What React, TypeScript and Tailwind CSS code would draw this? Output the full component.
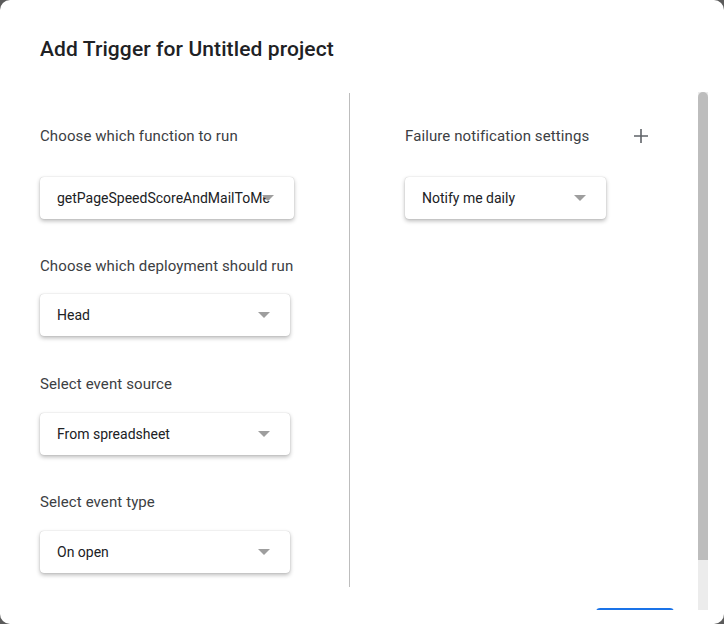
import { ReactNode } from "react";

function Caret() {
  return (
    <svg width="12" height="6" viewBox="0 0 12 6" className="shrink-0 -ml-3 relative">
      <path d="M0 0h12L6 6z" fill="#9e9e9e" />
    </svg>
  );
}

function Select({ value, width }: { value: string; width: string }) {
  return (
    <div
      className={`${width} h-[42px] rounded-[4px] bg-white flex items-center pl-[17px] pr-[20px] shadow-[0_0_1px_rgba(0,0,0,0.25),0_2px_4px_rgba(0,0,0,0.28)]`}
    >
      <span className="flex-1 min-w-0 text-[14px] text-[#202124] whitespace-nowrap overflow-hidden">
        {value}
      </span>
      <Caret />
    </div>
  );
}

function Label({ children, className = "" }: { children: ReactNode; className?: string }) {
  return (
    <p className={`text-[15px] leading-5 text-[#3c4043] tracking-[0.1px] ${className}`}>{children}</p>
  );
}

export default function App() {
  return (
    <div
      className="w-[724px] h-[624px] bg-[#5b5b5b]"
      style={{ fontFamily: "Roboto, 'Liberation Sans', sans-serif" }}
    >
      <div className="h-full rounded-[10px] bg-white flex flex-col overflow-hidden">
        <h1 className="h-[92px] shrink-0 pl-10 pt-[35px] text-[21px] leading-7 font-medium text-[#202124] tracking-[0.1px]">
          Add Trigger for Untitled project
        </h1>

        <div className="flex h-[518px] shrink-0">
          <div className="flex-1 flex flex-col overflow-hidden">
            <div className="flex shrink-0">
              {/* left column */}
              <div className="w-[349px] shrink-0 pl-10 pt-[34px]">
                <Label>Choose which function to run</Label>
                <div className="mt-[31px]">
                  <Select value="getPageSpeedScoreAndMailToMe" width="w-[254px]" />
                </div>
                <Label className="mt-[37px]">Choose which deployment should run</Label>
                <div className="mt-[18px]">
                  <Select value="Head" width="w-[250px]" />
                </div>
                <Label className="mt-[38px]">Select event source</Label>
                <div className="mt-[19px]">
                  <Select value="From spreadsheet" width="w-[250px]" />
                </div>
                <Label className="mt-[37px]">Select event type</Label>
                <div className="mt-[19px]">
                  <Select value="On open" width="w-[250px]" />
                </div>
              </div>

              <div className="w-px h-[494px] mt-px bg-[#bdbdbd] shrink-0" />

              {/* right column */}
              <div className="flex-1 pl-[55px] pt-[34px]">
                <div className="flex items-center justify-between pr-[50px]">
                  <Label>Failure notification settings</Label>
                  <svg width="14" height="14" viewBox="0 0 14 14">
                    <path d="M7 0v14M0 7h14" stroke="#5f6368" strokeWidth="1.6" />
                  </svg>
                </div>
                <div className="mt-[31px]">
                  <Select value="Notify me daily" width="w-[201px]" />
                </div>
              </div>
            </div>

            <div className="flex justify-end pr-[24px] mt-[21px] shrink-0">
              <button aria-label="Save" className="w-[78px] h-9 rounded-[4px] bg-[#1a73e8]" />
            </div>
          </div>

          {/* scrollbar */}
          <div className="w-[10px] mr-4 bg-[#ececec] shrink-0">
            <div className="h-[468px] bg-[#bdbdbd] rounded-t-[5px]" />
          </div>
        </div>
      </div>
    </div>
  );
}
